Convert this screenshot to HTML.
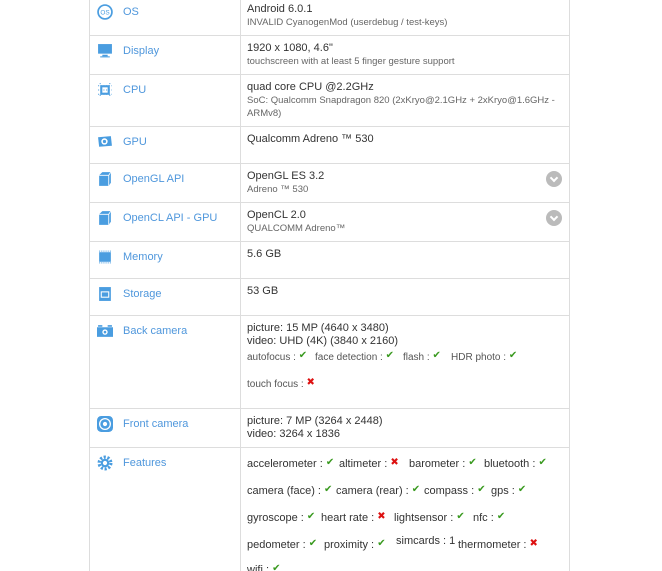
<!DOCTYPE html>
<html><head><meta charset="utf-8"><style>
*{margin:0;padding:0;box-sizing:border-box}
html,body{width:662px;height:571px;overflow:hidden}
body{background:#fff;font-family:"Liberation Sans","DejaVu Sans",sans-serif;position:relative;color:#333}
.tbl{position:absolute;left:89px;top:-1px;width:481px;height:572px;border-left:1px solid #ddd;border-right:1px solid #ddd}
.vl{position:absolute;left:240px;top:0;width:1px;height:571px;background:#ddd}
.hl{position:absolute;left:89px;width:481px;height:1px;background:#ddd}
.lab{position:absolute;left:123px;font-size:11px;color:#4f97dc}
.ic{position:absolute;left:97px;width:16px;height:16px}
.v{position:absolute;left:247px;font-size:11px;color:#333;line-height:13px}
.s{font-size:9.5px;color:#666;line-height:13px}
.f{position:absolute;font-size:10px;color:#555;white-space:nowrap}
.ff{position:absolute;font-size:11px;color:#333;white-space:nowrap;line-height:13px}
.ok{color:#3a9a20;font-size:10px;font-weight:bold;vertical-align:2px}
.no{color:#d11;font-size:10px;font-weight:bold;vertical-align:2px}
.chev{position:absolute;left:546px;width:16px;height:16px;border-radius:50%;background:#bbb}
.chev:after{content:"";position:absolute;left:5px;top:4px;width:4px;height:4px;border-right:2px solid #fff;border-bottom:2px solid #fff;transform:rotate(45deg)}
</style></head><body>
<div class="tbl"></div><div class="vl"></div>
<div class="hl" style="top:35px"></div><div class="hl" style="top:74px"></div><div class="hl" style="top:126px"></div><div class="hl" style="top:163px"></div><div class="hl" style="top:202px"></div><div class="hl" style="top:241px"></div><div class="hl" style="top:278px"></div><div class="hl" style="top:315px"></div><div class="hl" style="top:408px"></div><div class="hl" style="top:447px"></div>

<svg class="ic" style="top:4px" viewBox="0 0 15 15"><circle cx="7.5" cy="7.5" r="6.5" fill="none" stroke="#4a9de0" stroke-width="1.6"/><text x="7.5" y="10" font-size="6" fill="#4a9de0" text-anchor="middle" font-family="Liberation Sans">OS</text></svg>
<div class="lab" style="top:6px">OS</div>
<div class="v" style="top:3px">Android 6.0.1<br><span class="s">INVALID CyanogenMod (userdebug / test-keys)</span></div>

<svg class="ic" style="top:43px" viewBox="0 0 15 15"><rect x="1" y="1" width="13" height="9" fill="#4a9de0"/><rect x="5" y="11" width="5" height="1.5" fill="#4a9de0"/><rect x="3" y="12.5" width="9" height="1" fill="#4a9de0"/></svg>
<div class="lab" style="top:45px">Display</div>
<div class="v" style="top:42px">1920 x 1080, 4.6"<br><span class="s">touchscreen with at least 5 finger gesture support</span></div>

<svg class="ic" style="top:82px" viewBox="0 0 15 15"><rect x="3" y="3" width="9" height="9" fill="#4a9de0"/><rect x="5" y="5" width="5" height="5" fill="#fff"/><g stroke="#4a9de0" stroke-width="1" stroke-dasharray="1 1.5"><path d="M3 1V3M12 1V3M3 12V14M12 12V14"/><path d="M1 3.5H14M1 7.5H14M1 11.5H14"/></g></svg>
<div class="lab" style="top:84px">CPU</div>
<div class="v" style="top:81px">quad core CPU @2.2GHz<br><span class="s">SoC: Qualcomm Snapdragon 820 (2xKryo@2.1GHz + 2xKryo@1.6GHz -<br>ARMv8)</span></div>

<svg class="ic" style="top:134px" viewBox="0 0 15 15"><path d="M1 3L13 2 14 11 2 12Z" fill="#4a9de0"/><circle cx="7" cy="7" r="3" fill="#fff"/><circle cx="7" cy="7" r="1.5" fill="#4a9de0"/></svg>
<div class="lab" style="top:136px">GPU</div>
<div class="v" style="top:133px">Qualcomm Adreno ™ 530</div>

<svg class="ic" style="top:171px" viewBox="0 0 15 15"><path d="M2 4L5 1H13V11L11 14H2Z" fill="#4a9de0"/><path d="M2 4H11V14M11 4L13 1" stroke="#fff" stroke-width=".8" fill="none"/></svg>
<div class="lab" style="top:173px">OpenGL API</div>
<div class="v" style="top:170px">OpenGL ES 3.2<br><span class="s">Adreno ™ 530</span></div>
<div class="chev" style="top:171px"></div>

<svg class="ic" style="top:210px" viewBox="0 0 15 15"><path d="M2 4L5 1H13V11L11 14H2Z" fill="#4a9de0"/><path d="M2 4H11V14M11 4L13 1" stroke="#fff" stroke-width=".8" fill="none"/></svg>
<div class="lab" style="top:212px">OpenCL API - GPU</div>
<div class="v" style="top:209px">OpenCL 2.0<br><span class="s">QUALCOMM Adreno™</span></div>
<div class="chev" style="top:210px"></div>

<svg class="ic" style="top:249px" viewBox="0 0 15 15"><rect x="2" y="3" width="11" height="9" fill="#4a9de0"/><g stroke="#4a9de0" stroke-dasharray="1 1"><path d="M2 2H13M2 13H13"/></g></svg>
<div class="lab" style="top:251px">Memory</div>
<div class="v" style="top:248px">5.6 GB</div>

<svg class="ic" style="top:286px" viewBox="0 0 15 15"><rect x="2" y="1" width="11" height="13" fill="#4a9de0"/><rect x="3.5" y="5" width="8" height="6" fill="#fff"/><rect x="4.5" y="6" width="6" height="4" fill="#4a9de0"/></svg>
<div class="lab" style="top:288px">Storage</div>
<div class="v" style="top:285px">53 GB</div>

<svg class="ic" style="top:323px" viewBox="0 0 15 15"><rect x="0" y="4" width="15" height="9" fill="#4a9de0"/><rect x="1" y="2" width="4" height="1.5" fill="#4a9de0"/><rect x="10" y="2" width="4" height="1.5" fill="#4a9de0"/><circle cx="7.5" cy="8.5" r="2.5" fill="#fff"/><circle cx="7.5" cy="8.5" r="1.2" fill="#4a9de0"/></svg>
<div class="lab" style="top:325px">Back camera</div>
<div class="v" style="top:322px">picture: 15 MP (4640 x 3480)<br>video: UHD (4K) (3840 x 2160)</div>
<div class="f" style="left:247px;top:350px">autofocus : <span class="ok">✔</span></div>
<div class="f" style="left:315px;top:350px">face detection : <span class="ok">✔</span></div>
<div class="f" style="left:403px;top:350px">flash : <span class="ok">✔</span></div>
<div class="f" style="left:451px;top:350px">HDR photo : <span class="ok">✔</span></div>
<div class="f" style="left:247px;top:377px">touch focus : <span class="no">✖</span></div>

<svg class="ic" style="top:416px" viewBox="0 0 15 15"><rect x="0" y="0" width="15" height="15" rx="4" fill="#4a9de0"/><circle cx="7.5" cy="7.5" r="5" fill="none" stroke="#fff" stroke-width="1.2"/><circle cx="7.5" cy="7.5" r="2" fill="#fff"/></svg>
<div class="lab" style="top:418px">Front camera</div>
<div class="v" style="top:415px">picture: 7 MP (3264 x 2448)<br>video: 3264 x 1836</div>

<svg class="ic" style="top:455px" viewBox="0 0 15 15"><circle cx="7.5" cy="7.5" r="5.5" fill="none" stroke="#4a9de0" stroke-width="3" stroke-dasharray="2 1.5"/><circle cx="7.5" cy="7.5" r="4" fill="#4a9de0"/><circle cx="7.5" cy="7.5" r="2" fill="#fff"/></svg>
<div class="lab" style="top:457px">Features</div>
<div class="ff" style="left:247px;top:456px">accelerometer : <span class="ok">✔</span></div>
<div class="ff" style="left:339px;top:456px">altimeter : <span class="no">✖</span></div>
<div class="ff" style="left:409px;top:456px">barometer : <span class="ok">✔</span></div>
<div class="ff" style="left:484px;top:456px">bluetooth : <span class="ok">✔</span></div>
<div class="ff" style="left:247px;top:483px">camera (face) : <span class="ok">✔</span></div>
<div class="ff" style="left:336px;top:483px">camera (rear) : <span class="ok">✔</span></div>
<div class="ff" style="left:424px;top:483px">compass : <span class="ok">✔</span></div>
<div class="ff" style="left:491px;top:483px">gps : <span class="ok">✔</span></div>
<div class="ff" style="left:247px;top:510px">gyroscope : <span class="ok">✔</span></div>
<div class="ff" style="left:321px;top:510px">heart rate : <span class="no">✖</span></div>
<div class="ff" style="left:394px;top:510px">lightsensor : <span class="ok">✔</span></div>
<div class="ff" style="left:473px;top:510px">nfc : <span class="ok">✔</span></div>
<div class="ff" style="left:247px;top:537px">pedometer : <span class="ok">✔</span></div>
<div class="ff" style="left:324px;top:537px">proximity : <span class="ok">✔</span></div>
<div class="ff" style="left:396px;top:535px">simcards : 1</div>
<div class="ff" style="left:458px;top:537px">thermometer : <span class="no">✖</span></div>
<div class="ff" style="left:247px;top:562px">wifi : <span class="ok">✔</span></div>
</body></html>
